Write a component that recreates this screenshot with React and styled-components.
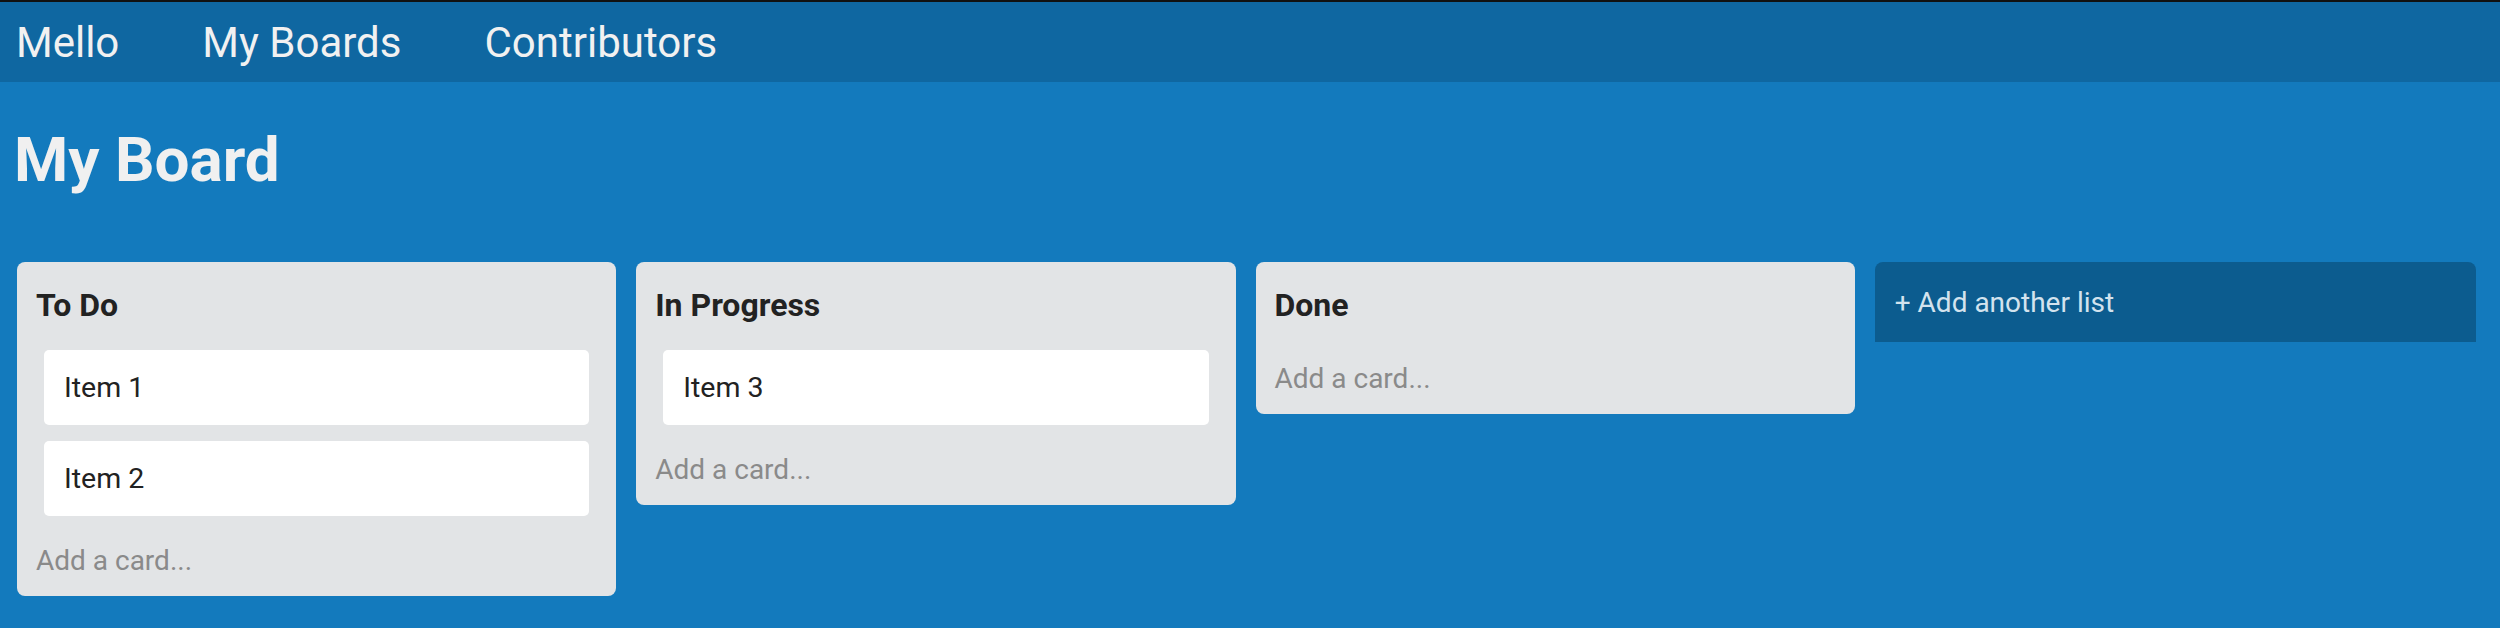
import styled, { createGlobalStyle } from "styled-components";

const GlobalStyle = createGlobalStyle`
  html, body {
    margin: 0;
    padding: 0;
    background-color: #137abd;
    font-family: Roboto, "Liberation Sans", sans-serif;
  }
  * {
    box-sizing: border-box;
  }
`;

const Page = styled.div`
  min-height: 100vh;
  background-color: #137abd;
`;

const Navbar = styled.nav`
  display: flex;
  align-items: center;
  gap: 83px;
  height: 82px;
  padding: 0 16px;
  border-top: 2px solid #111;
  background-color: #0f67a1;
`;

const NavLink = styled.a`
  font-size: 42px;
  color: #f1f1f1;
  text-decoration: none;
  cursor: pointer;
`;

const BoardTitle = styled.h1`
  margin: 0;
  padding: 41px 14px 0;
  font-size: 62px;
  font-weight: 700;
  line-height: normal;
  color: #f0f0f0;
`;

const Board = styled.div`
  display: flex;
  align-items: flex-start;
  gap: 20px;
  padding: 66px 24px 0 17px;
`;

const List = styled.div`
  flex: 1;
  padding: 24px 19px 19px;
  border-radius: 8px;
  background-color: #e2e4e6;
`;

const ListTitle = styled.h2`
  margin: 0 0 26px;
  font-size: 32px;
  font-weight: 700;
  line-height: normal;
  color: #222;
`;

const CardList = styled.div`
  display: flex;
  flex-direction: column;
  margin-bottom: 12px;
`;

const Card = styled.div`
  margin: 0 8px 16px;
  padding: 21px 18px 21px 20px;
  border-radius: 5px;
  background-color: #fff;
  font-size: 28.5px;
  line-height: normal;
  color: #222;
`;

const AddCard = styled.div`
  font-size: 28px;
  line-height: normal;
  color: #8a8a8a;
  cursor: pointer;
`;

const AddList = styled.div`
  flex: 1;
  display: flex;
  align-items: center;
  height: 80px;
  padding: 0 20px;
  border-radius: 8px 8px 0 0;
  background-color: #0c5c8f;
  font-size: 28px;
  color: #d3e3ee;
  cursor: pointer;
`;

const lists = [
  { title: "To Do", cards: ["Item 1", "Item 2"] },
  { title: "In Progress", cards: ["Item 3"] },
  { title: "Done", cards: [] },
];

export default function App() {
  return (
    <Page>
      <GlobalStyle />
      <Navbar>
        <NavLink>Mello</NavLink>
        <NavLink>My Boards</NavLink>
        <NavLink>Contributors</NavLink>
      </Navbar>
      <BoardTitle>My Board</BoardTitle>
      <Board>
        {lists.map((list) => (
          <List key={list.title}>
            <ListTitle>{list.title}</ListTitle>
            <CardList>
              {list.cards.map((card) => (
                <Card key={card}>{card}</Card>
              ))}
            </CardList>
            <AddCard>Add a card...</AddCard>
          </List>
        ))}
        <AddList>+ Add another list</AddList>
      </Board>
    </Page>
  );
}
